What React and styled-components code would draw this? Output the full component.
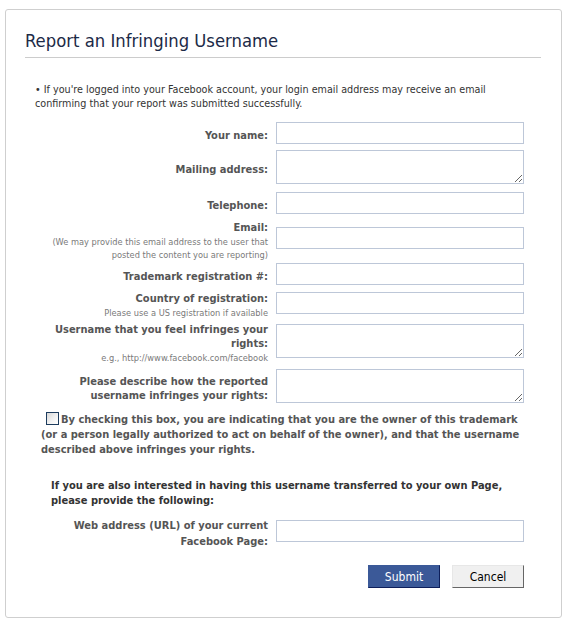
import React from 'react'
import styled, { createGlobalStyle } from 'styled-components';

const GlobalStyle = createGlobalStyle`
  body {
    margin: 0;
    background: #fff;
    font-family: "DejaVu Sans Condensed", "DejaVu Sans", sans-serif;
  }
`;

const Panel = styled.div`
  margin: 9px 5px 5px 5px;
  height: 609px;
  box-sizing: border-box;
  border: 1px solid #cfcfcf;
  border-radius: 3px;
  padding: 20px 20px 0 19px;
`;

const Title = styled.h2`
  margin: 0;
  font-size: 18.3px;
  font-weight: normal;
  line-height: 21px;
  color: #1c2a47;
  padding-bottom: 6px;
  border-bottom: 1px solid #cccccc;
`;

const Body = styled.div`
  padding: 0 17px 0 10px;
`;

const Notice = styled.p`
  margin: 25px 0 0 0;
  font-size: 10.7px;
  line-height: 14px;
  color: #333;
`;

const Fields = styled.div`
  margin-top: 11px;
`;

const Row = styled.div`
  display: grid;
  grid-template-columns: 233px 248px;
  column-gap: 8px;
  align-items: center;
  margin-top: ${p => p.$mt || 0}px;
`;

const Label = styled.label`
  text-align: right;
  padding-top: 6px;
  font-size: 11px;
  font-weight: bold;
  line-height: ${p => p.$lh || 14}px;
  color: #555;
  white-space: nowrap;
`;

const Hint = styled.span`
  display: block;
  font-size: 9.2px;
  font-weight: normal;
  line-height: 13px;
  color: #7a7a7a;
`;

const TextInput = styled.input`
  box-sizing: border-box;
  width: 248px;
  height: 22px;
  margin: 0;
  border: 1px solid #bdc7d8;
  padding: 3px;
  font-size: 11px;
  font-family: inherit;
`;

const TextArea = styled.textarea`
  box-sizing: border-box;
  width: 248px;
  height: 34px;
  margin: 0;
  border: 1px solid #bdc7d8;
  padding: 3px;
  font-size: 11px;
  font-family: inherit;
  display: block;
`;

const Consent = styled.p`
  margin: 9px 0 0 6px;
  font-size: 11px;
  font-weight: bold;
  line-height: 15px;
  color: #555;
`;

const CheckBox = styled.input`
  appearance: none;
  width: 13px;
  height: 13px;
  margin: 0 2px 0 5px;
  vertical-align: -2px;
  border: 1px solid #1d3c5e;
  background: linear-gradient(135deg, #d8d8d8 0%, #f4f4f4 60%, #ffffff 100%);
`;

const Transfer = styled.p`
  margin: 22px 0 0 16px;
  font-size: 11px;
  font-weight: bold;
  line-height: 14.5px;
  color: #333;
`;

const Actions = styled.div`
  display: flex;
  justify-content: flex-end;
  gap: 12px;
  margin-top: 15px;
`;

const Button = styled.button`
  box-sizing: border-box;
  width: 72px;
  height: 23px;
  padding: 0;
  font-family: "DejaVu Sans Condensed", "DejaVu Sans", sans-serif;
  font-size: 12px;
  border: 1px solid;
  color: ${p => p.$primary ? '#fff' : '#000'};
  background: ${p => p.$primary ? '#3b5998' : '#f0f0f0'};
  border-color: ${p => p.$primary
    ? '#3b5998 #0e1f5b #0e1f5b #3b5998'
    : '#e7e7e7 #666 #666 #e7e7e7'};
`;

const App = () => {
  return (
    <>
      <GlobalStyle />
      <Panel>
        <Title>Report an Infringing Username</Title>
        <Body>
          <Notice>
            • If you're logged into your Facebook account, your login email address may receive an email<br />
            confirming that your report was submitted successfully.
          </Notice>

          <Fields>
            <Row>
              <Label>Your name:</Label>
              <TextInput type="text" />
            </Row>
            <Row $mt={6}>
              <Label>Mailing address:</Label>
              <TextArea />
            </Row>
            <Row $mt={8}>
              <Label>Telephone:</Label>
              <TextInput type="text" />
            </Row>
            <Row $mt={1}>
              <Label>
                Email:
                <Hint>(We may provide this email address to the user that<br />posted the content you are reporting)</Hint>
              </Label>
              <TextInput type="text" />
            </Row>
            <Row $mt={2}>
              <Label>Trademark registration #:</Label>
              <TextInput type="text" />
            </Row>
            <Row $mt={1}>
              <Label>
                Country of registration:
                <Hint>Please use a US registration if available</Hint>
              </Label>
              <TextInput type="text" />
            </Row>
            <Row $mt={-2}>
              <Label>
                Username that you feel infringes your<br />rights:
                <Hint>e.g., http://www.facebook.com/facebook</Hint>
              </Label>
              <TextArea />
            </Row>
            <Row $mt={5}>
              <Label>Please describe how the reported<br />username infringes your rights:</Label>
              <TextArea />
            </Row>
          </Fields>

          <Consent>
            <CheckBox type="checkbox" />
            By checking this box, you are indicating that you are the owner of this trademark<br />
            (or a person legally authorized to act on behalf of the owner), and that the username<br />
            described above infringes your rights.
          </Consent>

          <Transfer>
            If you are also interested in having this username transferred to your own Page,<br />
            please provide the following:
          </Transfer>

          <Row $mt={4}>
            <Label $lh={16}>Web address (URL) of your current<br />Facebook Page:</Label>
            <TextInput type="text" />
          </Row>

          <Actions>
            <Button $primary type="button">Submit</Button>
            <Button type="button">Cancel</Button>
          </Actions>
        </Body>
      </Panel>
    </>
  )
}

export default App
